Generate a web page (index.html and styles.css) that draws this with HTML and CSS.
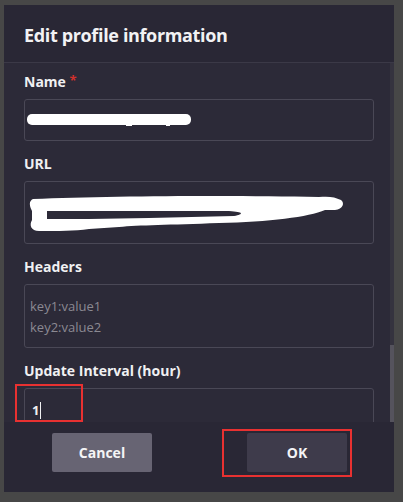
FILE: index.html
```html
<!DOCTYPE html>
<html>
<head>
<meta charset="utf-8">
<link rel="stylesheet" href="styles.css">
</head>
<body>
<div class="stage">
  <div class="dialog">
    <div class="dlg-header"><h1 class="title">Edit profile information</h1></div>
    <div class="dlg-body">
      <div class="content">
        <div class="field">
          <div class="label">Name <span class="req">*</span></div>
          <div class="input input-name">
            <svg class="redact" width="168" height="14" viewBox="0 0 168 14"><rect x="1" y="1" width="164" height="11" rx="5" fill="#fff"/><rect x="100" y="10" width="6" height="3" fill="#fff"/><rect x="140" y="10" width="4" height="3" fill="#fff"/></svg>
          </div>
        </div>
        <div class="field">
          <div class="label">URL</div>
          <div class="input input-url">
            <svg class="redact-url" width="316" height="42" viewBox="0 0 316 42"><path d="M4 4 C80 1 200 0 290 2 C300 1 306 2 312 5 C316 8 314 14 306 15 L296 15 C280 22 240 27 190 28 C140 30 110 30 90 32 L60 34 C45 36 30 36 10 36 C2 36 0 30 3 25 L3 16 C0 10 0 6 4 4 Z" fill="#fff"/><path d="M18 16 L200 16 C215 17 215 19 205 21 L120 23 L60 24 L18 24 Z" fill="#2c2a38"/></svg>
          </div>
        </div>
        <div class="field">
          <div class="label">Headers</div>
          <div class="input input-area">
            <div class="ph">key1:value1</div>
            <div class="ph">key2:value2</div>
          </div>
        </div>
        <div class="field">
          <div class="label">Update Interval (hour)</div>
          <div class="input input-num"><span class="val">1</span><span class="caret"></span></div>
        </div>
      </div>
      <div class="scrolltrack"><div class="thumb"></div></div>
    </div>
    <div class="dlg-footer">
      <button class="btn btn-cancel">Cancel</button>
      <button class="btn btn-ok">OK</button>
    </div>
    <div class="mark mark-input"></div>
    <div class="mark mark-ok"></div>
  </div>
</div>
</body>
</html>
```
FILE: styles.css
```css
html, body {
  margin: 0;
  padding: 0;
  background: #474747;
  width: 403px;
  height: 502px;
  overflow: hidden;
  font-family: "Open Sans", "Noto Sans", sans-serif;
}
.stage {
  padding: 5px 9px 10px 4px;
}
.dialog {
  position: relative;
  width: 390px;
  height: 487px;
  background: #2c2a38;
  display: flex;
  flex-direction: column;
  overflow: hidden;
}
.dlg-header {
  height: 58px;
  flex: none;
  background: #292735;
  border-bottom: 1px solid #3b3947;
  box-sizing: border-box;
  display: flex;
  align-items: center;
  padding-left: 20px;
}
.title {
  margin: 0;
  color: #f2f2f4;
  font-size: 18px;
  font-weight: 700;
  letter-spacing: -0.35px;
  padding-top: 2px;
}
.dlg-body {
  height: 359px;
  flex: none;
  display: flex;
  overflow: hidden;
}
.content {
  flex: 1;
  padding: 8px 16px 0 20px;
  display: flex;
  flex-direction: column;
  gap: 14px;
}
.scrolltrack {
  width: 4px;
  background: #35333f;
  display: flex;
  flex-direction: column;
  justify-content: flex-end;
}
.thumb {
  height: 77px;
  background: #55535d;
}
.field {
  display: flex;
  flex-direction: column;
  gap: 8px;
}
.label {
  color: #f0f0f2;
  font-size: 14px;
  font-weight: 700;
  line-height: 18px;
}
.req {
  color: #d2302c;
  font-size: 13px;
  vertical-align: 2px;
}
.input {
  box-sizing: border-box;
  border: 1px solid #4a4856;
  border-radius: 3px;
  width: 350px;
  background: #2c2a38;
}
.input-name {
  height: 42px;
  padding: 13px 0 0 1px;
}
.redact { display: block; }
.input-url {
  height: 63px;
  padding: 13px 0 0 4px;
}
.redact-url { display: block; }
.input-area {
  height: 64px;
  padding: 11px 5px 0 5px;
}
.ph {
  color: #8b8992;
  font-size: 13px;
  line-height: 21px;
}
.input-num {
  height: 44px;
  padding: 11px 0 0 7px;
  display: flex;
  align-items: flex-start;
  color: #f0f0f2;
  font-size: 13px;
  font-weight: 700;
  line-height: 20px;
}
.caret {
  width: 1px;
  height: 17px;
  background: #f0f0f2;
  margin: 2px 0 0 1px;
}
.dlg-footer {
  flex: 1;
  background: #292735;
  display: flex;
  align-items: flex-start;
  padding: 11px 0 0 48px;
  gap: 95px;
}
.btn {
  width: 100px;
  height: 39px;
  border: none;
  border-radius: 2px;
  color: #f4f4f6;
  font-family: inherit;
  font-size: 14px;
  font-weight: 700;
}
.btn-cancel { background: #676473; }
.btn-ok { background: #3e3b4b; }
.mark {
  position: absolute;
  border: 2px solid #e83131;
  box-sizing: border-box;
}
.mark-input {
  left: 11px;
  top: 379px;
  width: 68px;
  height: 38px;
}
.mark-ok {
  left: 218px;
  top: 424px;
  width: 130px;
  height: 48px;
}
```
